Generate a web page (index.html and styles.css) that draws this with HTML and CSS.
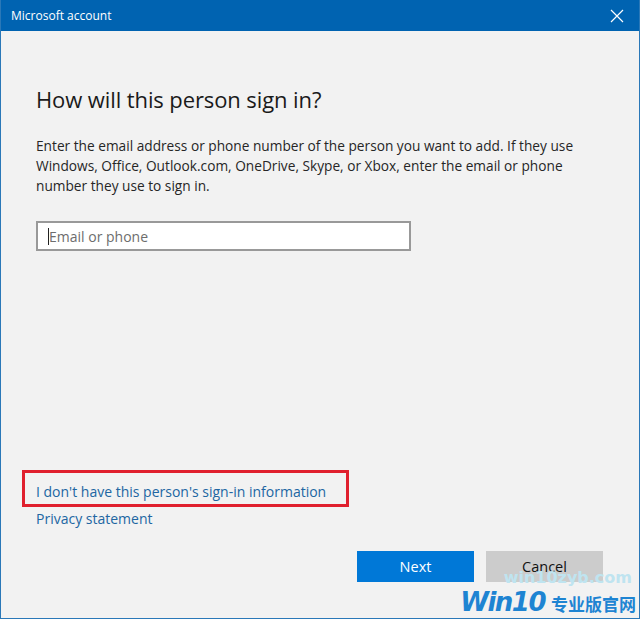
FILE: index.html
```html
<!DOCTYPE html>
<html>
<head>
<meta charset="utf-8">
<link rel="stylesheet" href="styles.css">
</head>
<body>
<div class="window">
  <div class="titlebar">
    <span class="title">Microsoft account</span>
    <svg class="close" width="14" height="14" viewBox="0 0 14 14"><path d="M1 1L13 13M13 1L1 13" stroke="#fff" stroke-width="1.2" fill="none"/></svg>
  </div>
  <div class="content">
    <h1 class="heading">How will this person sign in?</h1>
    <p class="desc">Enter the email address or phone number of the person you want to add. If they use Windows, Office, Outlook.com, OneDrive, Skype, or Xbox, enter the email or phone number they use to sign in.</p>
    <div class="input"><span class="caret"></span><span class="placeholder">Email or phone</span></div>
    <div class="links">
      <div class="highlight"><a class="link">I don't have this person's sign-in information</a></div>
      <a class="link privacy">Privacy statement</a>
    </div>
    <div class="buttons">
      <div class="btn primary">Next</div>
      <div class="btn secondary">Cancel</div>
    </div>
  </div>
  <div class="wm-url">win10zyb.com</div>
  <div class="wm-logo"><span class="wm-win">Win10</span><span class="wm-cn">专业版官网</span></div>
</div>
</body>
</html>
```
FILE: styles.css
```css
html, body {
  margin: 0;
  padding: 0;
  background: #f2f2f2;
}
.window {
  position: relative;
  width: 640px;
  height: 619px;
  box-sizing: border-box;
  border: 1px solid #2a78b8;
  border-top: none;
  display: flex;
  flex-direction: column;
  font-family: "Open Sans", "Noto Sans", sans-serif;
  color: #1f1f1f;
  overflow: hidden;
}
.titlebar {
  height: 31px;
  flex: none;
  background: #0063b1;
  display: flex;
  align-items: center;
  justify-content: space-between;
  padding: 0 16px 0 11px;
  margin: 0 -1px;
}
.title {
  color: #fff;
  font-size: 12px;
}
.close {
  display: block;
}
.content {
  flex: 1;
  display: flex;
  flex-direction: column;
  padding: 0 36px 36px 35px;
}
.heading {
  margin: 52px 0 0;
  font-size: 22px;
  font-weight: 400;
  line-height: 32px;
  color: #1a1a1a;
  letter-spacing: -0.1px;
}
.desc {
  margin: 21px 0 0;
  font-size: 13.7px;
  line-height: 20px;
  color: #262626;
  width: 560px;
}
.input {
  margin-top: 25px;
  width: 375px;
  height: 30px;
  box-sizing: border-box;
  border: 2px solid #999;
  background: #fff;
  display: flex;
  align-items: center;
  padding-left: 10px;
}
.caret {
  width: 1px;
  height: 17px;
  background: #222;
}
.placeholder {
  font-size: 14px;
  color: #6d6d6d;
}
.links {
  margin-top: auto;
  display: flex;
  flex-direction: column;
  align-items: flex-start;
}
.highlight {
  border: 3px solid #e0202e;
  margin-left: -14px;
  padding: 10px 20px 3px 11px;
}
.link {
  font-size: 14px;
  line-height: 18px;
  color: #2166a2;
  display: block;
}
.privacy {
  margin-top: 3px;
}
.buttons {
  margin-top: 23px;
  display: flex;
  justify-content: flex-end;
  gap: 12px;
}
.btn {
  width: 117px;
  height: 31px;
  display: flex;
  align-items: center;
  justify-content: center;
  font-size: 14.5px;
}
.primary {
  background: #0078d7;
  color: #fff;
}
.secondary {
  background: #cccccc;
  color: #111;
}
.wm-url {
  position: absolute;
  right: 7px;
  bottom: 31px;
  font-family: "DejaVu Sans", sans-serif;
  font-weight: 700;
  font-size: 16px;
  line-height: 18px;
  color: #bfe4f0;
  letter-spacing: 0;
}
.wm-logo {
  position: absolute;
  right: 3px;
  bottom: 0;
  display: flex;
  align-items: baseline;
  gap: 6px;
  color: #1e84d2;
}
.wm-win {
  font-family: "DejaVu Sans", sans-serif;
  font-style: italic;
  font-weight: 700;
  font-size: 26px;
  line-height: 28px;
  letter-spacing: -1.5px;
}
.wm-cn {
  font-family: "Noto Sans CJK SC", sans-serif;
  font-weight: 700;
  font-size: 17px;
  line-height: 28px;
}
```
